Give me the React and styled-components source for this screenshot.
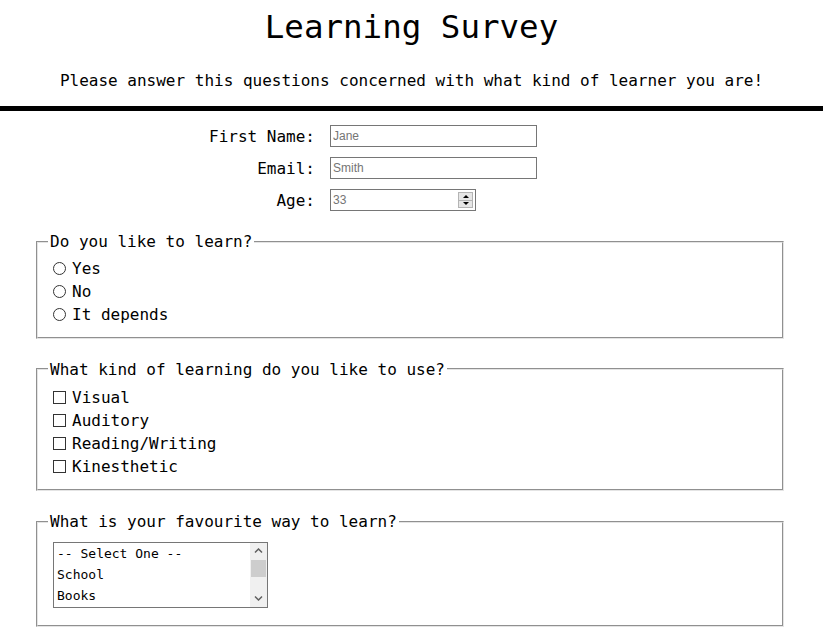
import React from "react"
import styled, { createGlobalStyle } from "styled-components"

const GlobalStyle = createGlobalStyle`
  body {
    margin: 0;
    background: #fff;
    color: #000;
    font-family: "DejaVu Sans Mono", "Liberation Mono", monospace;
    font-size: 16px;
  }
`

const Header = styled.header`
  text-align: center;
  padding-bottom: 16px;
  border-bottom: 5px solid #000;
`

const Title = styled.h1`
  margin: 8px 0 0;
  font-size: 32.5px;
  font-weight: normal;
`

const Subtitle = styled.p`
  margin: 25px 0 0;
  font-size: 16px;
`

const Details = styled.div`
  display: grid;
  grid-template-columns: 315px auto;
  column-gap: 15px;
  row-gap: 10px;
  align-items: center;
  justify-content: start;
  margin-top: 14px;
`

const FieldLabel = styled.label`
  text-align: right;
`

const TextInput = styled.input`
  box-sizing: border-box;
  width: 207px;
  height: 22px;
  margin: 0;
  padding: 1px 2px;
  border: 1px solid #767676;
  border-radius: 0;
  font-family: "Liberation Sans", Arial, sans-serif;
  font-size: 12px;
  outline: none;

  &::placeholder {
    color: #757575;
  }
`

const NumberBox = styled.div`
  box-sizing: border-box;
  display: flex;
  align-items: center;
  width: 146px;
  height: 22px;
  padding: 2px 2px 2px 0;
  border: 1px solid #767676;
`

const NumberInput = styled(TextInput)`
  flex: 1;
  width: auto;
  min-width: 0;
  height: 100%;
  border: none;
  padding: 0 2px;
`

const Spinner = styled.div`
  display: flex;
  flex-direction: column;
  width: 15px;
  height: 16px;
  background: #e6e6e6;
  border: 1px solid #b4b4b4;
  box-sizing: border-box;
`

const SpinButton = styled.span`
  flex: 1;
  display: flex;
  align-items: center;
  justify-content: center;
  border-top: ${(p) => (p.$down ? "1px solid #b4b4b4" : "none")};

  &::before {
    content: "";
    border-left: 3px solid transparent;
    border-right: 3px solid transparent;
    ${(p) =>
      p.$down ? "border-top: 3px solid #000;" : "border-bottom: 3px solid #000;"}
  }
`

const Sections = styled.div`
  display: flex;
  flex-direction: column;
  gap: 21px;
  margin-top: 21px;
  padding: 0 39px 20px 36px;
`

const Group = styled.fieldset`
  margin: 0;
  padding: 5.6px 10px 10px;
  border: 2px groove #e4e4e4;
  min-width: 0;
`

const Legend = styled.legend`
  padding: 0 2px;
  font-size: 16px;
`

const Choices = styled.div`
  padding-top: ${(p) => p.$top || 0}px;
  padding-bottom: ${(p) => p.$bottom || 0}px;
`

const Choice = styled.label`
  display: flex;
  align-items: center;
  height: 23px;
`

const Mark = styled.input`
  appearance: none;
  box-sizing: border-box;
  width: 13px;
  height: 13px;
  margin: 0 6px 0 5px;
  background: #fff;
  border: 1px solid #333;
  border-radius: ${(p) => (p.type === "radio" ? "50%" : "0")};
`

const ListBox = styled.div`
  display: flex;
  box-sizing: border-box;
  width: 215px;
  height: 66px;
  margin: 5px 0 7px 5px;
  border: 1px solid #767676;
  background: #fff;
  font-size: 13px;
`

const Options = styled.div`
  flex: 1;
  overflow: hidden;
`

const Option = styled.div`
  height: 21px;
  line-height: 21px;
  padding: 0 3px;
  white-space: nowrap;
`

const ScrollBar = styled.div`
  display: flex;
  flex-direction: column;
  width: 17px;
  background: #f0f0f0;
`

const ScrollArrow = styled.div`
  height: 17px;
  display: flex;
  align-items: center;
  justify-content: center;
`

const ScrollTrack = styled.div`
  flex: 1;
  padding: 0 1px;
`

const ScrollThumb = styled.div`
  height: 17px;
  background: #cdcdcd;
`

const Chevron = ({ down }) => (
  <svg width="9" height="6" viewBox="0 0 9 6">
    <path
      d={down ? "M1 1.5 L4.5 5 L8 1.5" : "M1 4.5 L4.5 1 L8 4.5"}
      fill="none"
      stroke="#606060"
      strokeWidth="1.5"
    />
  </svg>
)

const likes = ["Yes", "No", "It depends"]
const styles = ["Visual", "Auditory", "Reading/Writing", "Kinesthetic"]
// only the rows visible in the three-line list box
const ways = ["-- Select One --", "School", "Books"]

export default function App() {
  return (
    <>
      <GlobalStyle />
      <Header>
        <Title>Learning Survey</Title>
        <Subtitle>
          Please answer this questions concerned with what kind of learner you are!
        </Subtitle>
      </Header>

      <form>
        <Details>
          <FieldLabel htmlFor="name">First Name:</FieldLabel>
          <TextInput id="name" type="text" placeholder="Jane" />
          <FieldLabel htmlFor="email">Email:</FieldLabel>
          <TextInput id="email" type="text" placeholder="Smith" />
          <FieldLabel htmlFor="age">Age:</FieldLabel>
          <NumberBox>
            <NumberInput id="age" type="text" placeholder="33" />
            <Spinner>
              <SpinButton />
              <SpinButton $down />
            </Spinner>
          </NumberBox>
        </Details>

        <Sections>
          <Group>
            <Legend>Do you like to learn?</Legend>
            <Choices $bottom={1}>
              {likes.map((text) => (
                <Choice key={text}>
                  <Mark type="radio" name="like" />
                  {text}
                </Choice>
              ))}
            </Choices>
          </Group>

          <Group>
            <Legend>What kind of learning do you like to use?</Legend>
            <Choices $top={2} $bottom={1}>
              {styles.map((text) => (
                <Choice key={text}>
                  <Mark type="checkbox" />
                  {text}
                </Choice>
              ))}
            </Choices>
          </Group>

          <Group>
            <Legend>What is your favourite way to learn?</Legend>
            <ListBox role="listbox">
              <Options>
                {ways.map((text) => (
                  <Option key={text} role="option">
                    {text}
                  </Option>
                ))}
              </Options>
              <ScrollBar>
                <ScrollArrow>
                  <Chevron />
                </ScrollArrow>
                <ScrollTrack>
                  <ScrollThumb />
                </ScrollTrack>
                <ScrollArrow>
                  <Chevron down />
                </ScrollArrow>
              </ScrollBar>
            </ListBox>
          </Group>
        </Sections>
      </form>
    </>
  )
}
